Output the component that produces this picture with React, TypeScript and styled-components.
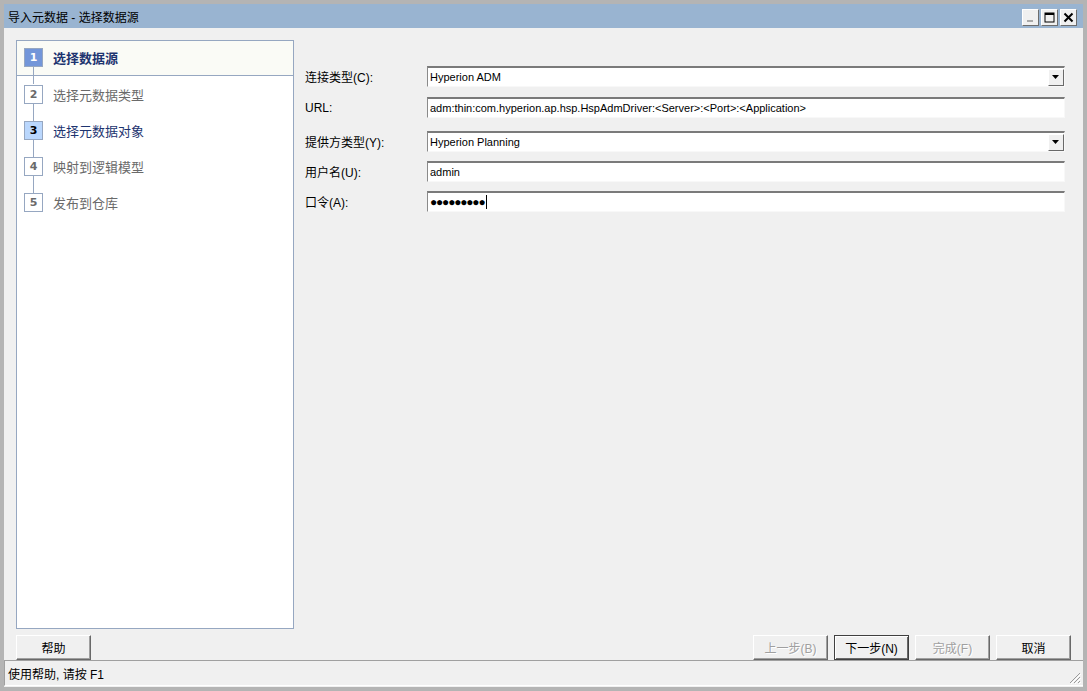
import React from "react";
import styled, { createGlobalStyle, css } from "styled-components";

const GlobalStyle = createGlobalStyle`
  html, body {
    margin: 0;
    padding: 0;
    background: #b4b4b4;
  }
  * {
    box-sizing: border-box;
  }
`;

const FONT = `"Liberation Sans", "Noto Sans CJK SC", sans-serif`;

const StyledWindow = styled.div`
  width: 1087px;
  height: 691px;
  border-style: solid;
  border-color: #b4b4b4;
  border-width: 4px 4px 4px 4px;
  background: #f0f0f0;
  display: flex;
  flex-direction: column;
  font-family: ${FONT};
  font-size: 12px;
  color: #000;
`;

const StyledTitleBar = styled.div`
  height: 24px;
  background: #99b4d1;
  display: flex;
  align-items: center;
  justify-content: space-between;
  padding: 0 6px 0 4px;
  flex-shrink: 0;
`;

const StyledTitle = styled.div`
  font-size: 12px;
  color: #000;
`;

const StyledCaptionButtons = styled.div`
  display: flex;
  gap: 2px;
  margin-top: 2px;
`;

const StyledCaptionButton = styled.div`
  width: 17px;
  height: 17px;
  background: #f0f0f0;
  border: 1px solid;
  border-color: #ffffff #6d6d6d #6d6d6d #ffffff;
  display: flex;
  align-items: center;
  justify-content: center;
`;

const StyledBody = styled.div`
  flex: 1;
  display: flex;
  padding: 12px 18px 0 12px;
  min-height: 0;
`;

const StyledStepPanel = styled.div`
  width: 278px;
  height: 589px;
  border: 1px solid #96a7c1;
  background: #ffffff;
  flex-shrink: 0;
`;

const StyledStep = styled.div<{ $current?: boolean }>`
  height: 36px;
  display: flex;
  align-items: center;
  padding-left: 7px;
  gap: 10px;
  ${(p) =>
    p.$current &&
    css`
      height: 35px;
      padding-bottom: 1px;
      background: #fafbf6;
      border-bottom: 1px solid #96a7c1;
    `}
`;

const StyledStepBox = styled.div<{ $state: "active" | "visited" | "idle"; $last?: boolean }>`
  position: relative;
  width: 19px;
  height: 19px;
  border: 1px solid #96a7c1;
  display: flex;
  align-items: center;
  justify-content: center;
  font-family: "DejaVu Sans", sans-serif;
  font-weight: bold;
  font-size: 11px;
  background: ${(p) =>
    p.$state === "active" ? "#7396d9" : p.$state === "visited" ? "#bad7fd" : "#ffffff"};
  color: ${(p) =>
    p.$state === "active" ? "#ffffff" : p.$state === "visited" ? "#000000" : "#6a6a6a"};

  &::after {
    content: "";
    display: ${(p) => (p.$last ? "none" : "block")};
    position: absolute;
    left: 8px;
    top: 100%;
    width: 1px;
    height: 18px;
    background: #96a7c1;
  }
`;

const StyledStepLabel = styled.div<{ $state: "active" | "visited" | "idle" }>`
  font-size: 13px;
  color: ${(p) => (p.$state === "idle" ? "#6a6a6a" : "#1d3470")};
  font-weight: ${(p) => (p.$state === "active" ? "bold" : "normal")};
`;

const StyledForm = styled.div`
  flex: 1;
  padding: 26px 0 0 11px;
  display: flex;
  flex-direction: column;
`;

const StyledRow = styled.div<{ $gap: number }>`
  display: flex;
  align-items: center;
  height: 21px;
  margin-bottom: ${(p) => p.$gap}px;
`;

const StyledLabel = styled.div`
  width: 122px;
  font-size: 12px;
  color: #000;
`;

const StyledField = styled.div`
  flex: 1;
  height: 21px;
  background: #ffffff;
  border-style: solid;
  border-width: 2px 1px 1px 1px;
  border-color: #7a7a7a #f8f8f8 #f8f8f8 #8a8a8a;
  display: flex;
  align-items: center;
  padding-left: 2px;
  font-size: 11px;
  color: #000;
  white-space: nowrap;
  overflow: hidden;
`;

const StyledFieldText = styled.span`
  flex: 1;
`;

const StyledPassword = styled.span`
  font-size: 12px;
  letter-spacing: -1.2px;
  border-right: 1px solid #000;
  padding-right: 2px;
  line-height: 14px;
`;

const StyledDropButton = styled.div`
  width: 16px;
  height: 17px;
  background: #f0f0f0;
  border: 1px solid;
  border-color: #ffffff #696969 #696969 #ffffff;
  display: flex;
  align-items: center;
  justify-content: center;
`;

const StyledFooter = styled.div`
  display: flex;
  align-items: center;
  justify-content: space-between;
  padding: 5px 12px 0 12px;
  height: 31px;
  flex-shrink: 0;
`;

const StyledButtonGroup = styled.div`
  display: flex;
  gap: 6px;
`;

const StyledButton = styled.div<{ $disabled?: boolean; $default?: boolean }>`
  width: 75px;
  height: 25px;
  display: flex;
  align-items: center;
  justify-content: center;
  font-size: 12px;
  background: #f0f0f0;
  border: 1px solid;
  border-color: #ffffff #696969 #696969 #ffffff;
  box-shadow: inset -1px -1px #a0a0a0;
  color: ${(p) => (p.$disabled ? "#a0a0a0" : "#000")};
  text-shadow: ${(p) => (p.$disabled ? "1px 1px #ffffff" : "none")};
  ${(p) =>
    p.$default &&
    css`
      border-color: #404040;
      box-shadow: inset 1px 1px #ffffff, inset -1px -1px #696969;
    `}
`;

const StyledStatusBar = styled.div`
  height: 26px;
  margin: 0 0 1px 0;
  border-style: solid;
  border-width: 1px 0 1px 1px;
  border-color: #a0a0a0 #ffffff #ffffff #a0a0a0;
  display: flex;
  align-items: center;
  justify-content: space-between;
  padding-left: 3px;
  font-size: 12px;
  flex-shrink: 0;
`;

const StyledGrip = styled.div`
  align-self: flex-end;
  margin-right: 2px;
  margin-bottom: 1px;
  line-height: 0;
`;

const steps = [
  { n: "1", label: "选择数据源", state: "active" as const },
  { n: "2", label: "选择元数据类型", state: "idle" as const },
  { n: "3", label: "选择元数据对象", state: "visited" as const },
  { n: "4", label: "映射到逻辑模型", state: "idle" as const },
  { n: "5", label: "发布到仓库", state: "idle" as const },
];

const DropArrow = () => (
  <svg width="8" height="4" viewBox="0 0 8 4">
    <path d="M0 0h7L3.5 4z" fill="#000" />
  </svg>
);

const App = () => {
  return (
    <>
      <GlobalStyle />
      <StyledWindow>
        <StyledTitleBar>
          <StyledTitle>导入元数据 - 选择数据源</StyledTitle>
          <StyledCaptionButtons>
            <StyledCaptionButton>
              <svg width="11" height="11" viewBox="0 0 11 11">
                <rect x="2" y="8" width="6" height="2" fill="#a8a8a8" />
              </svg>
            </StyledCaptionButton>
            <StyledCaptionButton>
              <svg width="11" height="11" viewBox="0 0 11 11">
                <rect x="1" y="1" width="9" height="9" fill="none" stroke="#000" strokeWidth="1" />
                <rect x="1" y="1" width="9" height="2" fill="#000" />
              </svg>
            </StyledCaptionButton>
            <StyledCaptionButton>
              <svg width="11" height="11" viewBox="0 0 11 11">
                <path d="M1.5 1.5l8 8M9.5 1.5l-8 8" stroke="#000" strokeWidth="2" />
              </svg>
            </StyledCaptionButton>
          </StyledCaptionButtons>
        </StyledTitleBar>

        <StyledBody>
          <StyledStepPanel>
            {steps.map((s, i) => (
              <StyledStep key={s.n} $current={s.state === "active"}>
                <StyledStepBox $state={s.state} $last={i === steps.length - 1}>
                  {s.n}
                </StyledStepBox>
                <StyledStepLabel $state={s.state}>{s.label}</StyledStepLabel>
              </StyledStep>
            ))}
          </StyledStepPanel>

          <StyledForm>
            <StyledRow $gap={10}>
              <StyledLabel>连接类型(C):</StyledLabel>
              <StyledField>
                <StyledFieldText>Hyperion ADM</StyledFieldText>
                <StyledDropButton>
                  <DropArrow />
                </StyledDropButton>
              </StyledField>
            </StyledRow>
            <StyledRow $gap={13}>
              <StyledLabel>URL:</StyledLabel>
              <StyledField>
                <StyledFieldText>
                  adm:thin:com.hyperion.ap.hsp.HspAdmDriver:&lt;Server&gt;:&lt;Port&gt;:&lt;Application&gt;
                </StyledFieldText>
              </StyledField>
            </StyledRow>
            <StyledRow $gap={9}>
              <StyledLabel>提供方类型(Y):</StyledLabel>
              <StyledField>
                <StyledFieldText>Hyperion Planning</StyledFieldText>
                <StyledDropButton>
                  <DropArrow />
                </StyledDropButton>
              </StyledField>
            </StyledRow>
            <StyledRow $gap={9}>
              <StyledLabel>用户名(U):</StyledLabel>
              <StyledField>
                <StyledFieldText>admin</StyledFieldText>
              </StyledField>
            </StyledRow>
            <StyledRow $gap={0}>
              <StyledLabel>口令(A):</StyledLabel>
              <StyledField>
                <StyledPassword>●●●●●●●●●</StyledPassword>
              </StyledField>
            </StyledRow>
          </StyledForm>
        </StyledBody>

        <StyledFooter>
          <StyledButton>帮助</StyledButton>
          <StyledButtonGroup>
            <StyledButton $disabled>上一步(B)</StyledButton>
            <StyledButton $default>下一步(N)</StyledButton>
            <StyledButton $disabled>完成(F)</StyledButton>
            <StyledButton>取消</StyledButton>
          </StyledButtonGroup>
        </StyledFooter>

        <StyledStatusBar>
          <span>使用帮助, 请按 F1</span>
          <StyledGrip>
            <svg width="12" height="12" viewBox="0 0 12 12">
              <path d="M11 1L1 11M11 5L5 11M11 9L9 11" stroke="#9a9a9a" strokeWidth="1" />
              <path d="M12 2L2 12M12 6L6 12M12 10L10 12" stroke="#ffffff" strokeWidth="1" />
            </svg>
          </StyledGrip>
        </StyledStatusBar>
      </StyledWindow>
    </>
  );
};

export default App;
